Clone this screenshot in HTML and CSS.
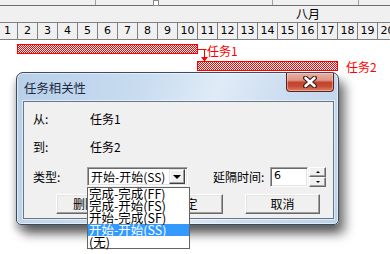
FILE: index.html
```html
<!DOCTYPE html>
<html lang="zh-CN">
<head>
<meta charset="utf-8">
<title>任务相关性</title>
<link rel="stylesheet" href="styles.css">
</head>
<body>
<svg class="defs" width="0" height="0">
  <defs>
    <pattern id="chk" width="2" height="2" patternUnits="userSpaceOnUse">
      <rect x="0" y="0" width="2" height="2" fill="#ffffff"/>
      <rect x="0" y="0" width="1" height="1" fill="#ff0000"/>
      <rect x="1" y="1" width="1" height="1" fill="#ff0000"/>
    </pattern>
  </defs>
</svg>
<div class="gantt">
  <div class="toolbar">
    <span class="tb tb1"></span><span class="tb tb2"></span><span class="thumb"></span><span class="tb tb3"></span><span class="tb tb4"></span><span class="tb tb5"></span>
  </div>
  <div class="months"><span class="month">八月</span></div>
  <div class="days">
    <span class="day first">1</span><span class="day">2</span><span class="day">3</span><span class="day">4</span><span class="day">5</span><span class="day">6</span><span class="day">7</span><span class="day">8</span><span class="day">9</span><span class="day">10</span><span class="day">11</span><span class="day">12</span><span class="day">13</span><span class="day">14</span><span class="day">15</span><span class="day">16</span><span class="day">17</span><span class="day">18</span><span class="day">19</span><span class="day">20</span>
  </div>
  <div class="canvas">
    <div class="bar bar1"><svg class="fill" width="179" height="8"><rect width="179" height="8" fill="url(#chk)"/></svg></div>
    <div class="bar bar2"><svg class="fill" width="139" height="8"><rect width="139" height="8" fill="url(#chk)"/></svg></div>
    <svg class="link" width="25" height="20" viewBox="0 0 25 20">
      <path d="M7 5.5H16.5M14.5 5.5V14" stroke="#ff0000" stroke-width="1" fill="none"/>
      <path d="M11 13H18L14.5 17.5Z" fill="#ff0000"/>
    </svg>
    <span class="tlabel l1">任务1</span>
    <span class="tlabel l2">任务2</span>
  </div>
</div>

<div class="dialog">
  <div class="titlebar">
    <span class="title">任务相关性</span>
    <span class="close">
      <svg width="14" height="12" viewBox="0 0 14 12">
        <path d="M2.5 2L11.5 10M11.5 2L2.5 10" stroke="#3a2420" stroke-width="5" stroke-linecap="round"/>
        <path d="M2.5 2L11.5 10M11.5 2L2.5 10" stroke="#ffffff" stroke-width="2.6" stroke-linecap="round"/>
      </svg>
    </span>
  </div>
  <div class="client">
    <div class="row r1"><span class="lab">从:</span><span class="val">任务1</span></div>
    <div class="row r2"><span class="lab">到:</span><span class="val">任务2</span></div>
    <div class="row r3">
      <span class="lab">类型:</span>
      <div class="combo">
        <span class="combo-text">开始-开始(SS)</span>
        <span class="combo-btn"><i class="tri-down"></i></span>
        <ul class="dropdown">
          <li>完成-完成(FF)</li>
          <li>完成-开始(FS)</li>
          <li>开始-完成(SF)</li>
          <li class="sel">开始-开始(SS)</li>
          <li>(无)</li>
        </ul>
      </div>
      <span class="lab2">延隔时间:</span>
      <div class="edit">6</div>
      <div class="spin">
        <span class="spin-btn"><i class="tri-up-s"></i></span>
        <span class="spin-btn"><i class="tri-down-s"></i></span>
      </div>
    </div>
    <div class="btnrow">
      <span class="btn b-del">删除</span>
      <span class="btn b-ok">确定</span>
      <span class="btn b-cancel">取消</span>
    </div>
  </div>
</div>
</body>
</html>
```
FILE: styles.css
```css
* { box-sizing: border-box; }
body {
  margin: 0;
  width: 390px;
  height: 254px;
  overflow: hidden;
  position: relative;
  background: #fff;
  font-family: "Noto Sans CJK SC", "Noto Sans", sans-serif;
  font-size: 12px;
  color: #000;
}
.defs { position: absolute; width: 0; height: 0; }

/* ---------- gantt ---------- */
.toolbar {
  display: flex;
  height: 6px;
  background: #f0f0f0;
  border-bottom: 1px solid #6e6e6e;
}
.tb { height: 5px; border-right: 1px solid #a0a0a0; }
.tb1 { width: 96px; }
.tb2 { width: 57px; border-right: none; }
.thumb { width: 6px; height: 6px; background: #fff; border: 1px solid #8a8a8a; }
.tb3 { width: 114px; }
.tb4 { width: 86px; }
.tb5 { flex: 1; border-right: none; }

.months {
  height: 16px;
  background: #f0f0f0;
  line-height: 16px;
  padding-left: 296px;
}
.days {
  display: flex;
  height: 18px;
  background: #f0f0f0;
  border-top: 1px solid #808080;
  border-bottom: 1px solid #808080;
  overflow: hidden;
}
.day {
  flex: 0 0 20px;
  border-right: 1px solid #808080;
  text-align: center;
  line-height: 16px;
  font-family: "DejaVu Sans", sans-serif;
  font-size: 11px;
}
.day.first { margin-left: -2px; }

.canvas { position: relative; height: 213px; }
.bar {
  position: absolute;
  height: 10px;
  border: 1px solid #ff0000;
  background: #fff;
}
.fill { display: block; shape-rendering: crispEdges; }
.bar1 { left: 17px; top: 4px; width: 181px; }
.bar2 { left: 197px; top: 21px; width: 141px; }
.link { position: absolute; left: 190px; top: 4px; }
.tlabel {
  position: absolute;
  color: #ff0000;
  line-height: 12px;
}
.l1 { left: 207px; top: 5px; }
.l2 { left: 346px; top: 21px; }

/* ---------- dialog ---------- */
.dialog {
  position: absolute;
  left: 16px;
  top: 72px;
  width: 323px;
  height: 153px;
  display: flex;
  flex-direction: column;
  padding: 0 4px 5px 6px;
  border: 1px solid #3b4a5c;
  border-radius: 7px 7px 5px 5px;
  background: linear-gradient(110deg, #b7cfe8 0%, #c9dcf0 35%, #e0ebf7 55%, #cadcef 75%, #bcd2ea 100%);
  box-shadow: inset 0 0 0 1px rgba(255,255,255,0.55), 6px 9px 11px 0 rgba(0,0,0,0.55), -2px 6px 6px rgba(0,0,0,0.2);
}
.titlebar {
  height: 28px;
  display: flex;
  align-items: flex-start;
}
.title {
  margin: 9px 0 0 1px;
  line-height: 12px;
  font-size: 12.4px;
  color: #1b2b44;
}
.close {
  margin-left: auto;
  width: 48px;
  height: 19px;
  display: flex;
  align-items: center;
  justify-content: center;
  border: 1px solid #5a241b;
  border-top: none;
  border-radius: 0 0 4px 4px;
  background: linear-gradient(#eab0a3 0%, #df9484 40%, #c4432f 52%, #c54a34 72%, #dc7f66 100%);
  box-shadow: inset 0 0 0 1px rgba(255,220,210,0.45);
}

.client {
  flex: 1;
  background: #f0f0f0;
  border: 1px solid #66778b;
  box-shadow: 0 0 0 1px rgba(255,255,255,0.5);
  display: flex;
  flex-direction: column;
  padding-top: 10px;
}
.row { display: flex; align-items: center; }
.r1, .r2 { height: 14px; line-height: 14px; }
.r2 { margin-top: 14px; }
.r3 { margin-top: 13px; height: 20px; align-items: flex-start; }
.lab { width: 57px; padding-left: 9px; flex: none; }
.val { padding-left: 9px; }
.r3 .lab { width: 63px; line-height: 20px; }
.lab2 { margin-left: 25px; width: 57px; line-height: 20px; }

.combo {
  position: relative;
  width: 101px;
  height: 19px;
  background: #fff;
  border: 1px solid;
  border-color: #a0a0a0 #fff #fff #a0a0a0;
  box-shadow: inset 1px 1px #696969, inset -1px -1px #e3e3e3;
  display: flex;
  align-items: center;
  padding: 2px 2px 2px 3px;
}
.combo-text { flex: 1; line-height: 14px; white-space: nowrap; }
.combo-btn {
  width: 16px;
  height: 15px;
  background: #f0f0f0;
  border: 1px solid;
  border-color: #e3e3e3 #404040 #404040 #e3e3e3;
  box-shadow: inset -1px -1px #a0a0a0, inset 1px 1px #fff;
  display: flex;
  align-items: center;
  justify-content: center;
}
.tri-down {
  width: 0; height: 0;
  border-left: 4px solid transparent;
  border-right: 4px solid transparent;
  border-top: 4px solid #000;
}
.dropdown {
  position: absolute;
  left: -1px;
  top: 19px;
  width: 103px;
  margin: 0;
  padding: 0;
  list-style: none;
  background: #fff;
  border: 1px solid #646464;
  z-index: 2;
}
.dropdown li {
  height: 12px;
  line-height: 12px;
  padding-left: 1px;
  white-space: nowrap;
  font-size: 12.5px;
}
.dropdown li.sel { background: #3399ff; color: #fff; }

.edit {
  width: 38px;
  height: 20px;
  background: #fff;
  border: 1px solid;
  border-color: #a0a0a0 #fff #fff #a0a0a0;
  box-shadow: inset 1px 1px #696969, inset -1px -1px #e3e3e3;
  padding-left: 3px;
  line-height: 16px;
  font-family: "DejaVu Sans", sans-serif;
  font-size: 11px;
}
.spin { width: 17px; height: 20px; margin-left: 1px; display: flex; flex-direction: column; }
.spin-btn {
  flex: 1;
  background: #f0f0f0;
  border: 1px solid;
  border-color: #fff #696969 #696969 #fff;
  box-shadow: inset -1px -1px #a0a0a0;
  display: flex;
  align-items: center;
  justify-content: center;
}
.tri-up-s {
  width: 0; height: 0;
  border-left: 2px solid transparent;
  border-right: 2px solid transparent;
  border-bottom: 2px solid #000;
}
.tri-down-s {
  width: 0; height: 0;
  border-left: 2px solid transparent;
  border-right: 2px solid transparent;
  border-top: 2px solid #000;
}

.btnrow { display: flex; margin-top: 7px; }
.btn {
  width: 75px;
  height: 20px;
  display: flex;
  align-items: center;
  justify-content: center;
  background: #f0f0f0;
  border: 1px solid;
  border-color: #fff #696969 #696969 #fff;
  box-shadow: inset -1px -1px #a0a0a0, inset 1px 1px #e3e3e3;
  line-height: 14px;
}
.b-del { margin-left: 32px; justify-content: flex-start; padding-left: 16px; }
.b-ok { margin-left: 17px; }
.b-cancel { margin-left: 22px; }
```
